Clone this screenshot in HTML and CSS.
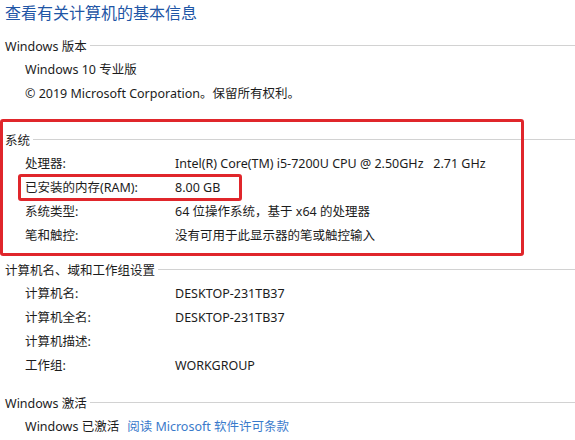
FILE: index.html
```html
<!DOCTYPE html>
<html lang="zh-CN">
<head>
<meta charset="utf-8">
<title>查看有关计算机的基本信息</title>
<link rel="stylesheet" href="styles.css">
</head>
<body>
<div class="page">
  <h1 class="title">查看有关计算机的基本信息</h1>

  <section class="sec sec-edition">
    <div class="sec-head"><span class="sec-label">Windows 版本</span><span class="sec-rule"></span></div>
    <div class="plain-row">Windows 10 专业版</div>
    <div class="plain-row">© 2019 Microsoft Corporation。保留所有权利。</div>
  </section>

  <section class="sec sec-system">
    <div class="sec-head"><span class="sec-label">系统</span><span class="sec-rule"></span></div>
    <div class="kv"><span class="k">处理器:</span><span class="v">Intel(R) Core(TM) i5-7200U CPU @ 2.50GHz&nbsp;&nbsp;&nbsp;2.71 GHz</span></div>
    <div class="kv"><span class="k">已安装的内存(RAM):</span><span class="v">8.00 GB</span></div>
    <div class="kv"><span class="k">系统类型:</span><span class="v">64 位操作系统，基于 x64 的处理器</span></div>
    <div class="kv"><span class="k">笔和触控:</span><span class="v">没有可用于此显示器的笔或触控输入</span></div>
  </section>

  <section class="sec sec-name">
    <div class="sec-head"><span class="sec-label">计算机名、域和工作组设置</span><span class="sec-rule"></span></div>
    <div class="kv"><span class="k">计算机名:</span><span class="v">DESKTOP-231TB37</span></div>
    <div class="kv"><span class="k">计算机全名:</span><span class="v">DESKTOP-231TB37</span></div>
    <div class="kv"><span class="k">计算机描述:</span><span class="v"></span></div>
    <div class="kv"><span class="k">工作组:</span><span class="v">WORKGROUP</span></div>
  </section>

  <section class="sec sec-activation">
    <div class="sec-head"><span class="sec-label">Windows 激活</span><span class="sec-rule"></span></div>
    <div class="plain-row">Windows 已激活<a class="link" href="#">阅读 Microsoft 软件许可条款</a></div>
  </section>

  <div class="mark mark-system"></div>
  <div class="mark mark-ram"></div>
</div>
</body>
</html>
```

FILE: styles.css
```css
html, body {
  margin: 0;
  padding: 0;
  background: #ffffff;
}

body {
  font-family: "Noto Sans", "Noto Sans CJK SC", sans-serif;
  font-size: 12.5px;
  color: #1c1c1c;
  overflow: hidden;
}

.page {
  position: relative;
  width: 575px;
  height: 440px;
}

.title {
  margin: 0;
  padding-left: 5px;
  height: 24px;
  line-height: 24px;
  font-size: 16px;
  font-weight: normal;
  color: #1f56a6;
  font-family: "Noto Sans CJK SC", "Noto Sans", sans-serif;
}

.sec {
  margin-top: 9px;
}

.sec-system {
  margin-top: 21px;
}

.sec-activation {
  margin-top: 12px;
}

.sec-head {
  display: flex;
  align-items: center;
  height: 24px;
  margin-bottom: 1px;
  padding-left: 5px;
}

.sec-label {
  white-space: nowrap;
}

.sec-rule {
  flex: 1;
  height: 1px;
  background: #d2d2d2;
  margin-left: 3px;
}

.plain-row {
  height: 24px;
  line-height: 24px;
  padding-left: 25px;
  white-space: nowrap;
}

.kv {
  display: grid;
  grid-template-columns: 150px 1fr;
  height: 24px;
  line-height: 24px;
  padding-left: 25px;
  white-space: nowrap;
}

.link {
  color: #3a7acb;
  text-decoration: none;
  margin-left: 8px;
}

.mark {
  position: absolute;
  border: 3px solid #e0262b;
  border-radius: 3px;
  box-sizing: border-box;
}

.mark-system {
  left: 0;
  top: 119px;
  width: 524px;
  height: 137px;
}

.mark-ram {
  left: 18px;
  top: 174px;
  width: 224px;
  height: 27px;
}
```
